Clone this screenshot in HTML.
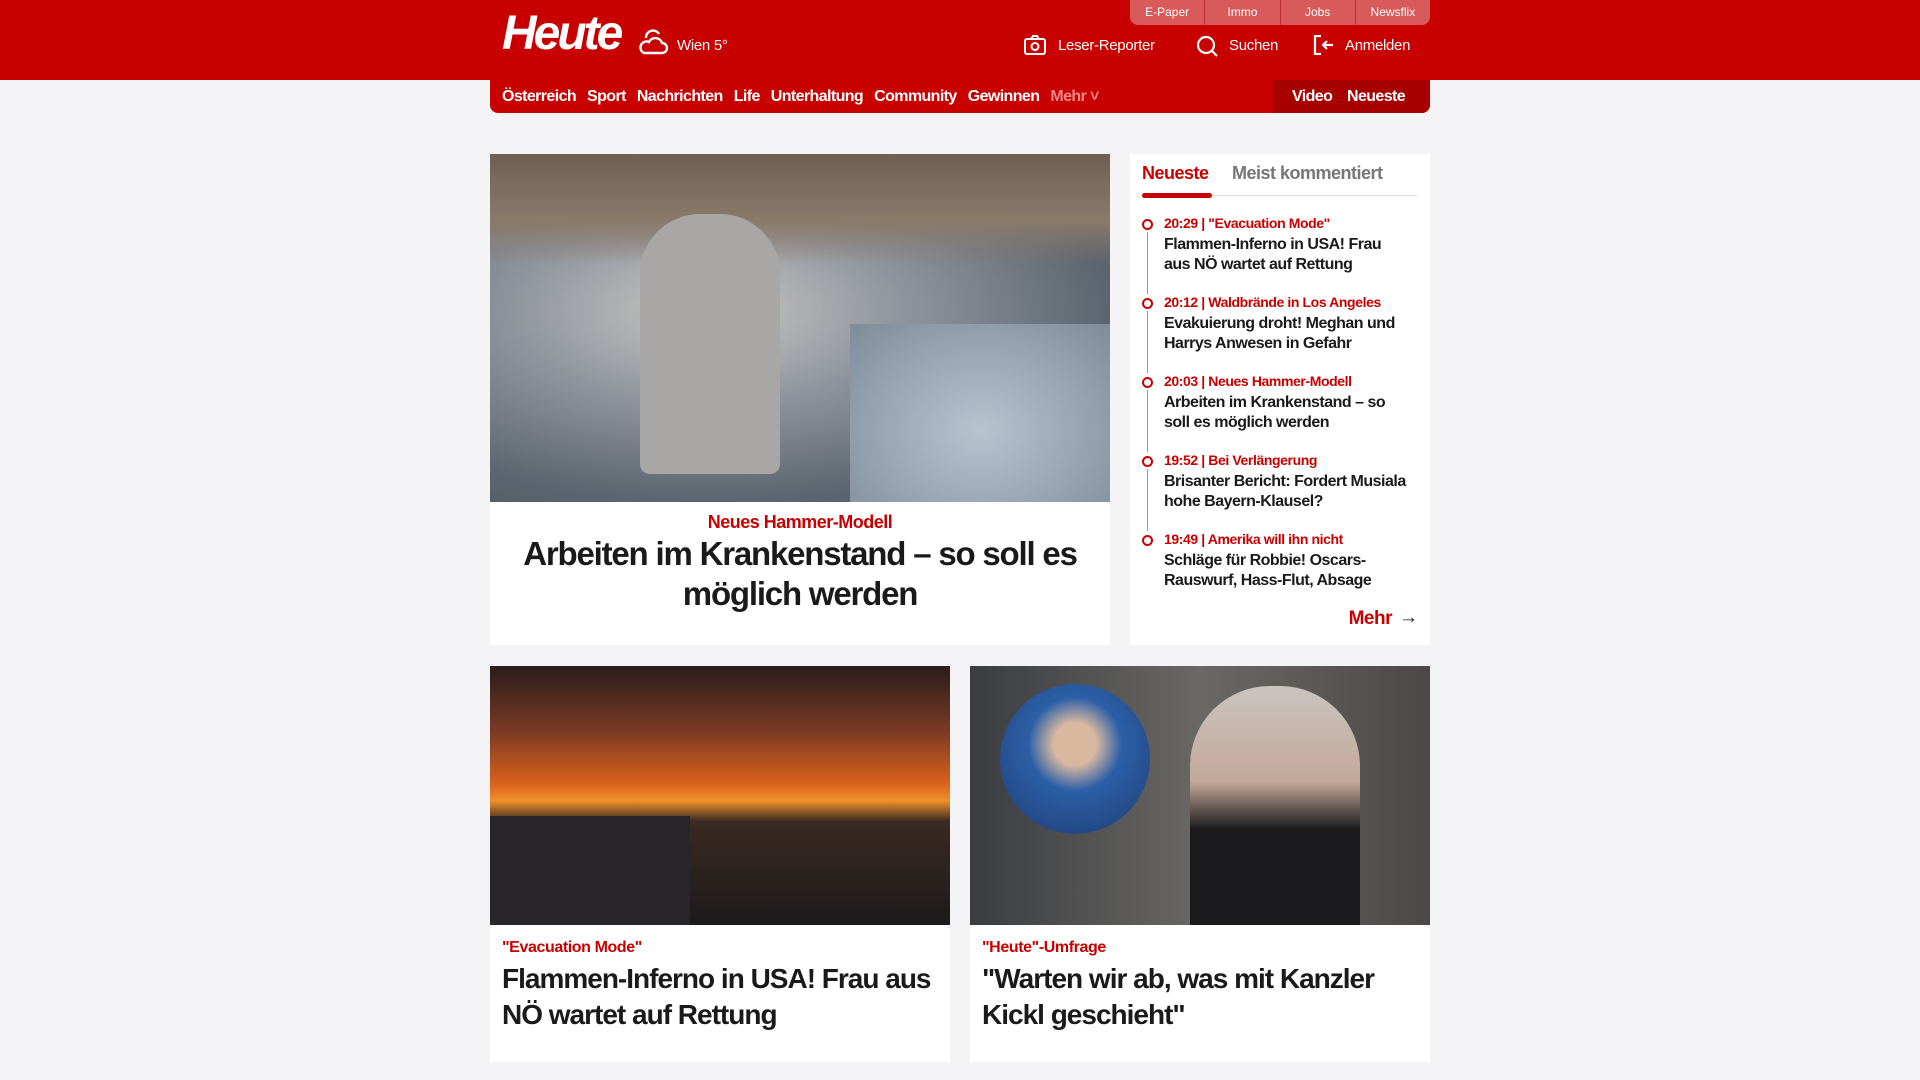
<!DOCTYPE html>
<html><head><meta charset="utf-8"><style>
*{margin:0;padding:0;box-sizing:border-box}
body{width:1920px;height:1080px;background:#f4f4f6;font-family:"Liberation Sans",sans-serif;font-weight:bold;overflow:hidden;position:relative;color:#1a1a1a}
.a{position:absolute}
.hdr{left:0;top:0;width:1920px;height:80px;background:#c80000}
.top{left:1130px;top:0;width:300px;height:25px;background:#d85a5a;border-radius:0 0 8px 8px;display:flex}
.top div{flex:1;color:#fff;font-weight:normal;font-size:12px;text-align:center;line-height:24px;border-left:1px solid #b83030}
.top div:first-child{border-left:none}
.logo{left:502px;top:6px;color:#fff;font-size:48px;font-style:italic;letter-spacing:-3px;font-weight:900}
.w{color:#fff;font-weight:normal;font-size:15px;letter-spacing:-0.3px}
.nav{left:490px;top:80px;width:940px;height:33px;background:#c80000;border-radius:0 0 8px 8px;display:flex;gap:11px;padding:8px 0 0 12px}
.nav span{color:#fff;font-size:16px;letter-spacing:-0.6px}
.dark{left:1273px;top:80px;width:157px;height:33px;background:#a80000;border-radius:0 0 8px 0}
.card{background:#fff}
.red{color:#c80000}
.side p{position:absolute;left:34px;font-size:14px;letter-spacing:-0.4px}
.side h4{position:absolute;left:34px;font-size:16px;line-height:20px;width:245px;color:#1a1a1a;letter-spacing:-0.5px}
.dot{position:absolute;left:12px;width:11px;height:11px;border:2px solid #c80000;border-radius:50%}
.ln{position:absolute;left:17px;width:1px;background:#999}
</style></head><body>
<div class="a hdr"></div>
<div class="a top"><div>E-Paper</div><div>Immo</div><div>Jobs</div><div>Newsflix</div></div>
<div class="a logo">Heute</div>
<svg class="a" style="left:638px;top:26px" width="32" height="30" viewBox="0 0 32 30" fill="none" stroke="#fff" stroke-width="2.4"><path d="M8 12a7 7 0 0 1 13-4"/><path d="M6 27h18a5 5 0 0 0 0-10 7 7 0 0 0-13-1 5 5 0 0 0-5 11z"/></svg>
<div class="a w" style="left:677px;top:37px">Wien 5°</div>
<svg class="a" style="left:1024px;top:35px" width="22" height="20" viewBox="0 0 22 20" fill="none" stroke="#fff" stroke-width="2"><rect x="1" y="4" width="20" height="15" rx="2"/><path d="M7 4l2-3h4l2 3"/><circle cx="11" cy="11.5" r="3.5"/></svg>
<div class="a w" style="left:1058px;top:37px">Leser-Reporter</div>
<svg class="a" style="left:1196px;top:35px" width="22" height="22" viewBox="0 0 22 22" fill="none" stroke="#fff" stroke-width="2.2"><circle cx="10" cy="10" r="8"/><path d="M16 16l5 5"/></svg>
<div class="a w" style="left:1229px;top:37px">Suchen</div>
<svg class="a" style="left:1313px;top:35px" width="22" height="20" viewBox="0 0 22 20" fill="none" stroke="#fff" stroke-width="2.2"><path d="M8 1H2v18h6"/><path d="M20 10H10M14 6l-4 4 4 4"/></svg>
<div class="a w" style="left:1345px;top:37px">Anmelden</div>
<div class="a nav">
<span>Österreich</span><span>Sport</span><span>Nachrichten</span><span>Life</span><span>Unterhaltung</span><span>Community</span><span>Gewinnen</span><span style="color:#e88">Mehr ˅</span>
</div>
<div class="a dark"><span style="position:absolute;left:19px;top:8px;color:#fff;font-size:16px;letter-spacing:-0.6px">Video</span><span style="position:absolute;left:74px;top:8px;color:#fff;font-size:16px;letter-spacing:-0.6px">Neueste</span></div>

<div class="a card" style="left:490px;top:154px;width:620px;height:491px">
<div style="height:348px;background:radial-gradient(ellipse at 35% 45%,#c9c6c2 0,#8e949c 35%,#5d6670 70%,#4a525a 100%)"></div>
<div style="position:absolute;left:0;top:0;width:620px;height:110px;background:linear-gradient(#6e5f52,#8a7a6a 60%,rgba(0,0,0,0))"></div>
<div style="position:absolute;left:360px;top:170px;width:260px;height:178px;background:radial-gradient(ellipse at 50% 60%,#b7c3cf,#7e8c9a)"></div>
<div style="position:absolute;left:150px;top:60px;width:140px;height:260px;border-radius:60px 60px 10px 10px;background:#a9a7a5"></div>
<div class="red" style="position:absolute;top:358px;width:620px;text-align:center;font-size:18px;letter-spacing:-0.5px">Neues Hammer-Modell</div>
<div style="position:absolute;top:380px;left:10px;width:600px;text-align:center;font-size:33px;line-height:40px;letter-spacing:-1.2px">Arbeiten im Krankenstand – so soll es möglich werden</div>
</div>

<div class="a card side" style="left:1130px;top:154px;width:300px;height:491px">
<div class="red" style="position:absolute;left:12px;top:9px;font-size:18px;letter-spacing:-0.5px">Neueste</div>
<div style="position:absolute;left:102px;top:9px;font-size:18px;color:#777;letter-spacing:-0.5px">Meist kommentiert</div>
<div style="position:absolute;left:12px;top:41px;width:276px;height:1px;background:#e4e4e4"></div>
<div style="position:absolute;left:12px;top:39px;width:70px;height:5px;background:#c80000;border-radius:3px"></div>
<div class="dot" style="top:65px"></div><div class="ln" style="top:78px;height:62px"></div>
<p class="red" style="top:61px">20:29 | "Evacuation Mode"</p><h4 style="top:81px">Flammen-Inferno in USA! Frau aus NÖ wartet auf Rettung</h4>
<div class="dot" style="top:144px"></div><div class="ln" style="top:157px;height:62px"></div>
<p class="red" style="top:140px">20:12 | Waldbrände in Los Angeles</p><h4 style="top:160px">Evakuierung droht! Meghan und Harrys Anwesen in Gefahr</h4>
<div class="dot" style="top:223px"></div><div class="ln" style="top:236px;height:62px"></div>
<p class="red" style="top:219px">20:03 | Neues Hammer-Modell</p><h4 style="top:239px">Arbeiten im Krankenstand – so soll es möglich werden</h4>
<div class="dot" style="top:302px"></div><div class="ln" style="top:315px;height:62px"></div>
<p class="red" style="top:298px">19:52 | Bei Verlängerung</p><h4 style="top:318px">Brisanter Bericht: Fordert Musiala hohe Bayern-Klausel?</h4>
<div class="dot" style="top:381px"></div>
<p class="red" style="top:377px">19:49 | Amerika will ihn nicht</p><h4 style="top:397px">Schläge für Robbie! Oscars-Rauswurf, Hass-Flut, Absage</h4>
<div class="red" style="position:absolute;right:38px;top:454px;font-size:19px;letter-spacing:-0.5px">Mehr</div>
<div style="position:absolute;right:12px;top:453px;font-size:19px">→</div>
</div>

<div class="a card" style="left:490px;top:666px;width:460px;height:396px">
<div style="height:259px;background:linear-gradient(180deg,#2a1d1c 0,#7a3a24 25%,#d8601c 45%,#f0902a 52%,#3a2a22 60%,#1c1a1c 100%)"></div>
<div style="position:absolute;left:0;top:150px;width:200px;height:109px;background:#28262a"></div>
<div class="red" style="position:absolute;left:12px;top:273px;font-size:16px;letter-spacing:-0.4px">"Evacuation Mode"</div>
<div style="position:absolute;left:12px;top:295px;width:446px;font-size:28px;line-height:36px;letter-spacing:-1px">Flammen-Inferno in USA! Frau aus NÖ wartet auf Rettung</div>
</div>

<div class="a card" style="left:970px;top:666px;width:460px;height:396px">
<div style="height:259px;background:linear-gradient(90deg,#3a3c40,#6a6864 50%,#4c4846)"></div>
<div style="position:absolute;left:30px;top:18px;width:150px;height:150px;border-radius:50%;background:radial-gradient(circle at 50% 40%,#d9b8a0 0,#d9b8a0 18%,#2c5fa8 40%,#1e3c70 100%)"></div>
<div style="position:absolute;left:220px;top:20px;width:170px;height:239px;border-radius:80px 80px 0 0;background:linear-gradient(#c8c4c0 0,#c4a898 40%,#1a1a1c 60%)"></div>
<div class="red" style="position:absolute;left:12px;top:273px;font-size:16px;letter-spacing:-0.4px">"Heute"-Umfrage</div>
<div style="position:absolute;left:12px;top:295px;width:440px;font-size:28px;line-height:36px;letter-spacing:-1px">"Warten wir ab, was mit Kanzler Kickl geschieht"</div>
</div>
</body></html>
